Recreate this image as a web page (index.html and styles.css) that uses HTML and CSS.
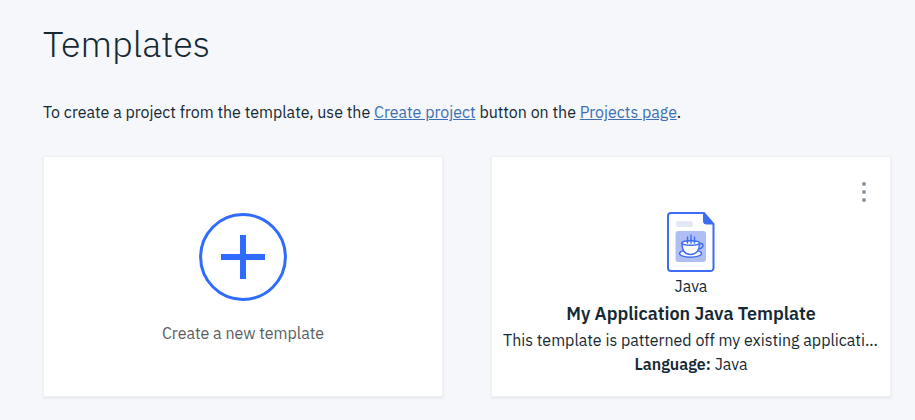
FILE: index.html
```html
<!DOCTYPE html>
<html lang="en">
<head>
<meta charset="utf-8">
<meta name="viewport" content="width=device-width, initial-scale=1">
<title>Templates</title>
<link rel="stylesheet" href="styles.css">
</head>
<body>
<main class="page">
  <h1 class="page-title">Templates</h1>
  <p class="intro">To create a project from the template, use the <a href="#create">Create project</a> button on the <a href="#projects">Projects page</a>.</p>
  <div class="cards">
    <button class="card card-new" type="button">
      <svg class="add-icon" viewBox="0 0 88 88" aria-hidden="true">
        <circle cx="44" cy="44" r="42.4" fill="none" stroke="#2f6bff" stroke-width="3"/>
        <path d="M44 22v44M22 44h44" fill="none" stroke="#2f6bff" stroke-width="6"/>
      </svg>
      <span>Create a new template</span>
    </button>
    <article class="card card-template">
      <button class="menu" type="button" aria-label="Template actions">
        <svg viewBox="0 0 4 20" aria-hidden="true">
          <circle cx="2" cy="2" r="2"/><circle cx="2" cy="10" r="2"/><circle cx="2" cy="18" r="2"/>
        </svg>
      </button>
      <svg class="file-icon" viewBox="0 0 48 60" aria-hidden="true">
        <path d="M4 1h33l9.500 11V56a3 3 0 0 1-3 3H4a3 3 0 0 1-3-3V4a3 3 0 0 1 3-3Z" fill="#fff" stroke="#3d6df2" stroke-width="2"/>
        <path d="M36.500 1 46.500 12H39a2.500 2.500 0 0 1-2.500-2.500Z" fill="#3d6df2" stroke="#3d6df2"/>
        <rect x="9" y="9" width="17" height="6" rx="2.500" fill="#e4e7f5"/>
        <rect x="8.500" y="19" width="30.500" height="31" rx="3" fill="#b0bff3"/>
        <ellipse cx="23.500" cy="41.500" rx="11" ry="3.800" fill="#fff" stroke="#3d6df2" stroke-width="1.400"/>
        <path d="M32 31.500h2.300c2.700 0 2.300 5.500-3.800 5.500" fill="none" stroke="#3d6df2" stroke-width="1.400"/>
        <path d="M15 31c0 6 2 11.500 8.500 11.500S32.500 37 32.500 31Z" fill="#fff" stroke="#3d6df2" stroke-width="1.400"/>
        <ellipse cx="23.700" cy="31" rx="8.800" ry="2.300" fill="#fff" stroke="#3d6df2" stroke-width="1.400"/>
        <path d="M20.500 25v6M24 23v8M27.500 25v6" fill="none" stroke="#3d6df2" stroke-width="1.400" stroke-linecap="round"/>
      </svg>
      <p class="kind">Java</p>
      <h2 class="name">My Application Java Template</h2>
      <p class="description">This template is patterned off my existing application</p>
      <p class="language"><strong>Language:</strong> Java</p>
    </article>
  </div>
</main>
</body>
</html>
```
FILE: styles.css
```css
* { box-sizing: border-box; }

body {
  margin: 0;
  background: #f5f7fb;
  color: #152935;
  font: 16px/24px "IBM Plex Sans", Roboto, "Liberation Sans", sans-serif;
}

h1, h2, p { margin: 0; }

.page { padding: 20px 24px 24px 43px; }

.page-title {
  font-size: 36px;
  font-weight: 300;
  line-height: 48px;
}

.intro { margin: 32px 0; }

.intro a { color: #3d70b2; }

.cards {
  display: grid;
  grid-template-columns: repeat(2, minmax(0, 1fr));
  gap: 48px;
}

.card {
  position: relative;
  display: flex;
  flex-direction: column;
  align-items: center;
  min-height: 240px;
  border: 1px solid #eff1f5;
  background: #fff;
  box-shadow: 0 1px 2px #dfe3e6;
  color: inherit;
  font: inherit;
  text-align: center;
}

.card-new {
  justify-content: center;
  gap: 20px;
  padding: 4px 12px 0;
  color: #5a5e62;
  cursor: pointer;
}

.add-icon { width: 88px; height: 88px; }

.card-template { padding: 55px 11px 20px; }

.menu {
  position: absolute;
  top: 19px;
  right: 14px;
  display: grid;
  place-items: center;
  width: 24px;
  height: 32px;
  padding: 0;
  border: 0;
  background: none;
  cursor: pointer;
}

.menu svg {
  width: 4px;
  height: 20px;
  fill: #8897a2;
}

.file-icon { width: 48px; height: 60px; }

.kind { margin-top: 2px; }

.name {
  margin: 4px 0 0;
  font-size: 18px;
  font-weight: 600;
  line-height: 24px;
}

.description {
  width: 100%;
  margin-top: 2px;
  overflow: hidden;
  text-overflow: ellipsis;
  white-space: nowrap;
}

.language strong { font-weight: 600; }
```
